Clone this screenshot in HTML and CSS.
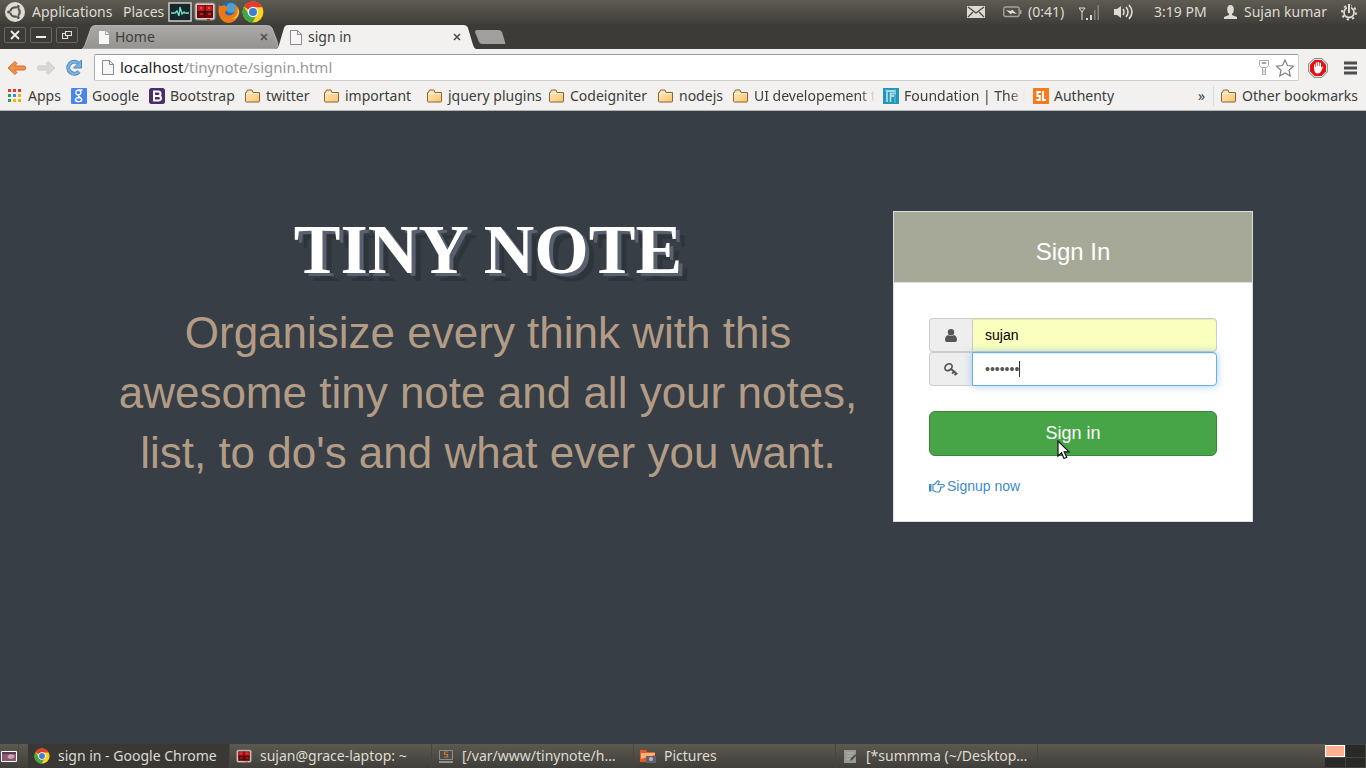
FILE: index.html
```html
<!DOCTYPE html>
<html lang="en">
<head>
<meta charset="utf-8">
<title>sign in</title>
<link rel="stylesheet" href="styles.css">
</head>
<body>
<svg class="defs" aria-hidden="true">
  <defs>
    <linearGradient id="gold" x1="0" y1="0" x2="1" y2="1"><stop offset="0" stop-color="#ffeec4"/><stop offset="1" stop-color="#fbc36a"/></linearGradient>
    <linearGradient id="metal" x1="0" y1="0" x2="0" y2="1"><stop offset="0" stop-color="#aaa9a7"/><stop offset="1" stop-color="#949390"/></linearGradient>
    <symbol id="folder" viewBox="0 0 16 16"><path d="M.5 13V4.500h1l1-2.500h4.500l1 2.500h6.500V13q0 1-1 1h-12q-1 0-1-1z" fill="url(#gold)" stroke="#8c6239"/><path d="M1.500 5.500h12" stroke="#fff3d6"/></symbol>
    <symbol id="chrome" viewBox="0 0 20 20"><circle cx="10" cy="10" r="9.500" fill="#ffd21e"/><path d="M10 10 1.800 5.200A9.500 9.500 0 0 1 18.500 5.700H10z" fill="#e33b2e"/><path d="M1.800 5.200A9.500 9.500 0 0 0 9.500 19.500L13.700 12 10 10 6 12z" fill="#3fa845"/><circle cx="10" cy="10" r="4.700" fill="#fff"/><circle cx="10" cy="10" r="3.700" fill="#3f7fd0"/></symbol>
    <symbol id="terminal" viewBox="0 0 22 20"><rect x="1" y="1" width="20" height="17" rx="2" fill="#d1cdc8" stroke="#8b8782"/><path d="M3 3h16v13H3z" fill="#6d0708"/><path d="M3.500 3.500h15v6h-15z" fill="#c51b1b"/><path d="M11 3v13M3 9.500h16" stroke="#300"/><path d="m6 5 2 2m0-2L6 7m8-2 2 2m0-2-2 2M6 12h3m5 0h3" stroke="#f06060" stroke-width=".8"/><path d="M13 17.500h3" stroke="#e00"/></symbol>
    <symbol id="page" viewBox="0 0 12 15"><path d="M.5.500h7l4 4v10H.5z" fill="#f7f7f7" stroke="#8b8b8b"/><path d="M7.500.5v4h4" fill="none" stroke="#8b8b8b"/></symbol>
    <symbol id="close" viewBox="0 0 8 8"><path d="m1 1 6 6m0-6L1 7" stroke="#4d4d4a" stroke-width="1.600"/></symbol>
  </defs>
</svg>

<header class="panel">
  <nav class="panel-menu">
    <svg width="20" height="20" viewBox="0 0 20 20"><circle cx="10" cy="10" r="10" fill="#dfdbd2"/><circle cx="10" cy="10" r="4.700" fill="none" stroke="#55524a" stroke-width="2.200"/><g stroke="#dfdbd2" stroke-width="1.200"><path d="M10 10H3M10 10l3.500-6M10 10l3.500 6"/></g><circle cx="10" cy="10" r="3.200" fill="#dfdbd2"/><g fill="#55524a"><circle cx="3.600" cy="10" r="1.500"/><circle cx="13.200" cy="4.400" r="1.500"/><circle cx="13.200" cy="15.600" r="1.500"/></g></svg>
    <a href="#">Applications</a>
    <a href="#">Places</a>
  </nav>
  <div class="launchers">
    <svg width="24" height="20" viewBox="0 0 24 20"><rect x="1" y="1" width="22" height="18" fill="#16262b" stroke="#d0cec9" stroke-width="1.500"/><path d="M3 11h4l2-2 2 5 1-9 2 7 2-2 1 1h4" fill="none" stroke="#72e3cb" stroke-width="1.300"/></svg>
    <svg width="22" height="20"><use href="#terminal"/></svg>
    <svg width="22" height="22" viewBox="0 0 22 22"><circle cx="11" cy="11" r="10.300" fill="#276bb3"/><circle cx="13" cy="7" r="5" fill="#45a3dc"/><path d="M1 4c1 1 2 1 3 1 2-1 4 0 5 1l2 3c-3 0-4 1-4 3 1 3 6 3 8 1 3-3 3-7 1-10 4 2 6 6 5 10-2 6-6 9-11 9C3 21-1 14 1 4z" fill="#ed7817"/><path d="M19 6c2 5 0 10-5 12 5 0 7-4 7-8z" fill="#ffd13c"/></svg>
    <svg width="22" height="22"><use href="#chrome"/></svg>
  </div>
  <div class="indicators">
    <svg width="18" height="14" viewBox="0 0 18 14"><path d="M0 1h18v12H0z" fill="#dfdbd2"/><path d="m1 2 8 6 8-6M1 12l5-5m11 5-5-5" fill="none" stroke="#4d4b44" stroke-width="1.300"/></svg>
    <svg width="19" height="12" viewBox="0 0 19 12"><rect x=".7" y="1" width="15.500" height="9.500" rx="2" fill="none" stroke="#a5a29a" stroke-width="1.400"/><path d="M17 4h1.500v4H17z" fill="#a5a29a"/><path d="m3 4 5 1 1-1.500L14 8 9 7 8 8.500z" fill="#dfdbd2"/></svg>
    <span>(0:41)</span>
    <svg width="20" height="18" viewBox="0 0 20 18"><path d="M0 5h6L3 9zm3 3v9" fill="none" stroke="#dfdbd2"/><path d="M7 15h2v2H7zm4-3h2v5h-2z" fill="#dfdbd2"/><path d="M15 7h1.500v10H15zm3.500-5H20v15h-1.500z" fill="#85827a"/></svg>
    <svg width="22" height="18" viewBox="0 0 22 18"><path d="M1 6h3l4-3v12l-4-3H1z" fill="#dfdbd2"/><path d="M10 6q2 3 0 6m3-8q4 5 0 10m3-12q6 7 0 14" fill="none" stroke="#dfdbd2" stroke-width="1.600"/></svg>
    <time>3:19 PM</time>
    <svg width="13" height="15" viewBox="0 0 13 15"><ellipse cx="6.500" cy="4.500" rx="3.300" ry="4.500" fill="#dfdbd2"/><path d="M5 7h3v3l5 2v2H0v-2l5-2z" fill="#dfdbd2"/></svg>
    <span>Sujan kumar</span>
    <svg width="18" height="18" viewBox="0 0 18 18"><circle cx="9" cy="9.500" r="5" fill="none" stroke="#dfdbd2" stroke-width="1.800"/><circle cx="9" cy="9.500" r="7" fill="none" stroke="#dfdbd2" stroke-width="2" stroke-dasharray="2.300 3.200"/><path d="M7 2h4v6H7z" fill="#4c4a43"/><path d="M9 1v9" stroke="#dfdbd2" stroke-width="2"/></svg>
  </div>
</header>

<div class="tabstrip">
  <div class="window-buttons">
    <button type="button" aria-label="Close"><svg width="10" height="10" viewBox="0 0 10 10"><path d="m1 1 8 8m0-8L1 9" stroke="#eee" stroke-width="1.800"/></svg></button>
    <button type="button" aria-label="Minimize"><svg width="10" height="10" viewBox="0 0 10 10"><path d="M0 7h10" stroke="#eee" stroke-width="2"/></svg></button>
    <button type="button" aria-label="Restore"><svg width="10" height="10" viewBox="0 0 10 10"><path d="M3.500 1.500h6v4h-6zM3 3.500H.5v5h5V6" fill="none" stroke="#ddd" stroke-width="1.200"/></svg></button>
  </div>
  <div class="tab">
    <svg class="tab-shape" viewBox="0 0 200 24" preserveAspectRatio="none"><path d="M0 24q2-1 3-4L9 3q1-2.500 4-2.500h172q4 0 5 2.500l5 13q2 6-2 8z" fill="url(#metal)" stroke="#c2c1be" stroke-width=".8"/></svg>
    <svg class="tab-icon" width="10" height="13" viewBox="0 0 10 13"><path d="M0 0h6v4h4v9H0zM7 0l3 3H7z" fill="#f6f6f6"/></svg>
    <span>Home</span>
    <button type="button" aria-label="Close Home"><svg width="8" height="8"><use href="#close"/></svg></button>
  </div>
  <div class="tab tab-active">
    <svg class="tab-shape" viewBox="0 0 200 24" preserveAspectRatio="none"><path d="M0 24q2-1 3-4L8 3q1-3 4-3h175q4 0 5 3l5 17q1 3 3 4z" fill="#f2f1f0"/></svg>
    <svg class="tab-icon" width="12" height="15"><use href="#page"/></svg>
    <span>sign in</span>
    <button type="button" aria-label="Close sign in"><svg width="8" height="8"><use href="#close"/></svg></button>
  </div>
  <button class="new-tab" type="button" aria-label="New tab"><svg width="32" height="15" viewBox="0 0 32 15"><path d="M1 2q0-2 2-2h21q3 0 4 2l3 10q1 2-1 2H8q-2 0-3-2z" fill="#a09f9d"/></svg></button>
</div>

<div class="toolbar">
  <button type="button" aria-label="Back"><svg width="20" height="16" viewBox="0 0 20 16"><path d="M8 1.500 1 8l7 6.500 2-2L7.500 10H17q1.500 0 1.500-2T17 6H7.500L10 3.500z" fill="#f0924c" stroke="#d56b22"/></svg></button>
  <button type="button" aria-label="Forward"><svg width="20" height="16" viewBox="0 0 20 16"><path d="m12 1.500 7 6.500-7 6.500-2-2 2.500-2.500H3Q1.500 10 1.500 8T3 6h9.500L10 3.500z" fill="#d9d8d6" stroke="#cccbc9"/></svg></button>
  <button type="button" aria-label="Reload"><svg width="18" height="18" viewBox="0 0 18 18"><path d="M14 12.500A6 6 0 1 1 13 4" fill="none" stroke="#4686bf" stroke-width="4"/><path d="M14 12.500A6 6 0 1 1 13 4" fill="none" stroke="#79b1df" stroke-width="2.400"/><path d="M16.500 1v8h-8z" fill="#79b1df" stroke="#4686bf"/></svg></button>
  <div class="address">
    <svg width="12" height="15"><use href="#page"/></svg>
    <a href="#">localhost<span>/tinynote/signin.html</span></a>
    <svg width="10" height="16" viewBox="0 0 10 16"><path d="M.5.500h9v5l-2 2h-5l-2-2zm3 7v7h3v-7M3 2.500h4v1H3zM5 13v-3" fill="none" stroke="#a9a9a9"/></svg>
    <svg width="20" height="18" viewBox="0 0 20 18"><path d="m10 1 2.500 5.500 6 .7-4.500 4 1.300 5.800L10 14l-5.300 3L6 11.200l-4.500-4 6-.7z" fill="#fff" stroke="#808080" stroke-width="1.200"/></svg>
  </div>
  <button type="button" aria-label="AdBlock"><svg width="20" height="20" viewBox="0 0 20 20"><path d="M6 .7h8L19.300 6v8L14 19.300H6L.7 14V6z" fill="#fff" stroke="#777"/><path d="M6.500 2h7L18 6.500v7L13.500 18h-7L2 13.500v-7z" fill="#e31313"/><path d="M6 10V6.500h1.200V9h.6V4.500H9V8h.6V4H11v4h.6V4.800H13V10l1-1.500 1 .5-2 4.500q-1 2-3.500 2T6.500 13z" fill="#fff"/></svg></button>
  <button type="button" aria-label="Menu"><svg width="13" height="14" viewBox="0 0 13 14"><path d="M0 2h13M0 7h13M0 12h13" stroke="#4c4c4c" stroke-width="3"/></svg></button>
</div>

<nav class="bookmarks">
  <a href="#"><svg width="14" height="14" viewBox="0 0 14 14"><path d="M0 0h3v3H0zm5 0h3v3H5zm5 0h3v3h-3z" fill="#e3392c"/><path d="M0 5h3v3H0zm0 5h3v3H0z" fill="#2f9e50"/><path d="M5 5h3v3H5z" fill="#4285f4"/><path d="M10 5h3v3h-3zM5 10h3v3H5zm5 0h3v3h-3z" fill="#f4b400"/></svg>Apps</a>
  <a href="#"><svg width="16" height="16" viewBox="0 0 16 16"><rect width="16" height="16" rx="1" fill="#4a86e8"/><path d="M11.500 2H8C5 2 4.500 4 5 5.500 5.500 7 8 7.500 9.500 6 10.500 4 9.500 2.500 8 2.500M7.500 7c-1 2 3 2 3.200 4.500S5 14.500 4.500 12s3.500-2.500 4.500-2.500" fill="none" stroke="#fff" stroke-width="1.400"/></svg>Google</a>
  <a href="#"><svg width="16" height="16" viewBox="0 0 16 16"><rect width="16" height="16" rx="2.500" fill="#4b2e70"/><path d="M5 3.500h4q2.500 0 2.500 2.200T9 8q3 0 3 2.300T9 12.500H5zM5 8h4" fill="none" stroke="#fff" stroke-width="2"/></svg>Bootstrap</a>
  <a href="#"><svg width="16" height="16"><use href="#folder"/></svg>twitter</a>
  <a href="#"><svg width="16" height="16"><use href="#folder"/></svg>important</a>
  <a href="#"><svg width="16" height="16"><use href="#folder"/></svg>jquery plugins</a>
  <a href="#"><svg width="16" height="16"><use href="#folder"/></svg>Codeigniter</a>
  <a href="#"><svg width="16" height="16"><use href="#folder"/></svg>nodejs</a>
  <a class="faded" href="#"><svg width="16" height="16"><use href="#folder"/></svg>UI developement t</a>
  <a class="faded" href="#"><svg width="16" height="16" viewBox="0 0 16 16"><path d="M0 0h16v16H0z" fill="#2795b6"/><path d="M4 14V3h8v2.500H7.500V14m0-6H11" fill="none" stroke="#a6dcec" stroke-width="1.800"/><path d="M3 1v3m9-3v14" stroke="#72bfd5"/></svg>Foundation | The M</a>
  <a href="#"><svg width="16" height="16" viewBox="0 0 16 16"><path d="M0 0h16v16H0z" fill="#fb7b1c"/><path d="M8 4H4.500v4h2.300v4H3.500M10 3v9h3" fill="none" stroke="#fff" stroke-width="2"/></svg>Authenty</a>
  <button class="more" type="button">»</button>
  <a class="other" href="#"><svg width="16" height="16"><use href="#folder"/></svg>Other bookmarks</a>
</nav>

<main class="page">
  <div class="container">
    <section class="intro">
      <h1>TINY NOTE</h1>
      <p>Organisize every think with this awesome tiny note and all your notes, list, to do's and what ever you want.</p>
    </section>
    <section class="card">
      <h2>Sign In</h2>
      <form class="card-body">
        <div class="field">
          <label for="user" aria-label="Username"><svg width="12" height="13" viewBox="0 0 12 13"><circle cx="6" cy="3.300" r="3.200" fill="#555"/><path d="M3 6q3 2 6 0 3 1 3 5 0 2-2 2H2q-2 0-2-2 0-4 3-5z" fill="#555"/></svg></label>
          <input class="filled" id="user" type="text" value="sujan">
        </div>
        <div class="field">
          <label for="password" aria-label="Password"><svg width="14" height="13" viewBox="0 0 14 13"><ellipse cx="4.500" cy="4.200" rx="3.900" ry="3" transform="rotate(-40 4.500 4.200)" fill="none" stroke="#555" stroke-width="1.700"/><path d="m6.500 5.500 6.700 5.700M10 8.300l-1.800 2.400m4-.7-1.500 2.200" fill="none" stroke="#555" stroke-width="1.900"/></svg></label>
          <input class="active" id="password" type="password" value="tinynot">
          <i class="caret"></i>
        </div>
        <button class="submit" type="submit">Sign in<svg class="pointer" width="14" height="21" viewBox="0 0 14 21"><path d="M1 1v15l3.500-3.300L7 18.500l2.800-1.200-2.600-5.500H12z" fill="#fff" stroke="#111" stroke-width="1.200"/></svg></button>
        <a class="signup" href="#"><svg width="16" height="13" viewBox="0 0 16 13"><path d="M0 4h2.500v7.500H0z" fill="#428bca"/><path d="M4 4.500h1.500L8.500 1q2-.5 1.500 1.500L9 4.500h5q1.300.2 1.300 1.200T14 7h-3q1.500.5.500 2 .5 1-.7 1.500.2 1.500-1.500 1.500H7L4 10.500z" fill="none" stroke="#428bca" stroke-width="1.200"/></svg>Signup now</a>
      </form>
    </section>
  </div>
</main>

<footer class="taskbar">
  <button class="desktop" type="button" aria-label="Show desktop"><svg width="16" height="11" viewBox="0 0 16 11"><path d="M.5.500h15v10H.5z" fill="#8f5674" stroke="#fff"/><path d="M1 2h14" stroke="#493440" stroke-width="1.500"/><path d="M9 3q-5 3 0 5 6-1 4-4z" fill="#c9a5b8"/></svg></button>
  <div class="windows">
    <button class="current" type="button"><svg width="16" height="16"><use href="#chrome"/></svg>sign in - Google Chrome</button>
    <button type="button"><svg width="16" height="15"><use href="#terminal"/></svg>sujan@grace-laptop: ~</button>
    <button type="button"><svg width="16" height="15" viewBox="0 0 16 15"><path d="M1.500 1.500h13v9h-13z" fill="#4d4d4a" stroke="#8f8e8b"/><path d="M1 13h14" stroke="#aaa" stroke-width="1.500"/><path d="M10 3H6.500v2.500h3V8H6" fill="none" stroke="#c07a35" stroke-width="1.200"/></svg>[/var/www/tinynote/h…</button>
    <button type="button"><svg width="16" height="15" viewBox="0 0 16 15"><path d="M0 1h6l1 2h8v10H0z" fill="#e85b21"/><path d="M1 4h14v2L1 10z" fill="#f6b280"/><path d="M6 7h10v7H6z" fill="#66606d"/><circle cx="11" cy="10" r="2" fill="#b9b4c2"/></svg>Pictures</button>
    <button type="button"><svg width="16" height="15" viewBox="0 0 16 15"><path d="M2 1h12v13H2z" fill="#979793"/><path d="M4 4h8M4 7h6M4 10h4" stroke="#b4b4af"/><path d="m8 12 1-3 5-4 1 1-5 5z" fill="#4c4b47"/></svg>[*summma (~/Desktop…</button>
  </div>
  <div class="workspaces"><i class="here"></i><i></i><i></i><i></i></div>
</footer>
</body>
</html>
```

FILE: styles.css
```css
* { box-sizing: border-box; }
body {
  margin: 0;
  min-height: 100vh;
  display: flex;
  flex-direction: column;
  background: #373e46;
  font: 14px/20px "Noto Sans", sans-serif;
  color: #3d3d3b;
}
a { color: inherit; text-decoration: none; }
button {
  border: 0;
  padding: 0;
  background: none;
  color: inherit;
  font: inherit;
}
svg { flex: none; }
button > svg { display: block; }
.defs { position: absolute; width: 0; height: 0; }

/* Desktop panel */
.panel {
  height: 24px;
  display: flex;
  align-items: center;
  background: linear-gradient(#5e5b52, #3f3e39);
  color: #dfdbd2;
  padding: 0 8px 0 5px;
}
.panel-menu {
  display: grid;
  grid-template-columns: 27px 91px 45px;
  align-items: center;
}
.launchers { display: flex; align-items: center; gap: 2px; }
.indicators {
  margin-left: auto;
  display: grid;
  grid-template-columns: 36px 25px 51px 34px 41px 70px 20px 96px 18px;
  align-items: center;
  white-space: nowrap;
}

/* Browser tabs */
.tabstrip {
  height: 25px;
  display: flex;
  align-items: flex-end;
  background: #3c3b37;
}
.window-buttons { display: flex; gap: 4px; padding: 0 4px 6px; }
.window-buttons button {
  width: 22px;
  height: 16px;
  display: grid;
  place-items: center;
  border: 1px solid #69675f;
  border-radius: 2px;
}
.tab {
  position: relative;
  width: 200px;
  height: 24px;
  display: flex;
  align-items: center;
  gap: 6px;
  padding: 0 14px 0 17px;
}
.tab-active { margin-left: -6px; padding: 0 15px 0 14px; }
.tab-shape { position: absolute; inset: 0; width: 100%; height: 100%; }
.tab-icon, .tab span, .tab button { position: relative; }
.tab button { margin-left: auto; }
.new-tab { padding-bottom: 4px; margin-left: -2px; }

/* Toolbar */
.toolbar {
  height: 35px;
  display: flex;
  align-items: center;
  gap: 9px;
  padding: 2px 9px 0 7px;
  background: #f2f1f0;
}
.address {
  flex: 1;
  height: 27px;
  display: flex;
  align-items: center;
  gap: 6px;
  margin-left: 2px;
  padding: 0 3px 0 7px;
  border: 1px solid #cfcecd;
  border-top-color: #9a9a9a;
  border-left-color: #aaa;
  border-radius: 2px;
  background: #fff;
}
.address a { flex: 1; padding-bottom: 2px; font-size: 15px; color: #222; }
.address a span { color: #999; }
.toolbar button:last-child { margin-left: 7px; }

/* Bookmarks */
.bookmarks {
  height: 27px;
  display: grid;
  grid-template-columns: 63px 78px 96px 79px 103px 122px 109px 75px 150px 150px 90px 1fr auto;
  align-items: center;
  padding: 0 8px 2px;
  background: #f2f1f0;
  border-bottom: 1px solid #b5b4b3;
  white-space: nowrap;
}
.bookmarks a { display: flex; align-items: center; gap: 5px; }
.bookmarks a:first-child { gap: 6px; }
.bookmarks .faded {
  width: 142px;
  overflow: hidden;
  mask-image: linear-gradient(90deg, #000 90%, transparent);
}
.more { justify-self: end; padding-right: 8px; }
.bookmarks .other { padding-left: 7px; border-left: 1px solid #d0dbe4; }

/* Page */
.page { flex: 1; padding: 100px 0; font-family: "Liberation Sans", Arial, sans-serif; }
.container {
  max-width: 1170px;
  margin: 0 auto;
  display: grid;
  grid-template-columns: 2fr 1fr;
  align-items: start;
}
.intro { padding: 0 15px; text-align: center; }
.intro h1 {
  margin: 0 0 15px;
  font: bold 70px/77px "Liberation Serif", "Times New Roman", serif;
  color: #fff;
  text-shadow: 4px 3px 0 #5b6070, 9px 8px 0 #2e353a;
}
.intro p { margin: 0; font-size: 44px; line-height: 60px; color: #b39c85; }
.card { margin: 0 15px; background: #fff; border: 1px solid #ddd; }
.card h2 {
  margin: 0;
  padding: 27px 16px 17px;
  font-size: 24px;
  font-weight: normal;
  line-height: 26px;
  text-align: center;
  color: #fff;
  background: #a7a998;
  border-bottom: 1px solid #ddd;
}
.card-body { padding: 35px 35px 25px; }
.field { position: relative; display: flex; height: 34px; }
.field label {
  width: 43px;
  display: grid;
  place-items: center;
  background: #eee;
  border: 1px solid #ccc;
  border-right: 0;
  border-radius: 4px 0 0 4px;
}
.field input {
  flex: 1;
  min-width: 0;
  padding: 6px 12px;
  border: 1px solid #ccc;
  border-radius: 0 4px 4px 0;
  background: #fff;
  font: inherit;
  color: #555;
  outline: 0;
  box-shadow: inset 0 1px 1px rgba(0, 0, 0, .08);
}
.field .filled { background: #faffbd; color: #000; }
.field .active {
  border-color: #66afe9;
  box-shadow: inset 0 1px 1px rgba(0, 0, 0, .08), 0 0 8px rgba(102, 175, 233, .6);
}
.caret { position: absolute; left: 90px; top: 9px; width: 1px; height: 16px; background: #333; }
.submit {
  position: relative;
  display: block;
  width: 100%;
  height: 45px;
  margin: 25px 0 20px;
  padding-bottom: 2px;
  border: 1px solid #398439;
  border-radius: 6px;
  background: #47a447;
  color: #fff;
  font-size: 18px;
}
.pointer { position: absolute; left: 127px; top: 28px; }
.signup { display: flex; align-items: center; gap: 2px; color: #428bca; }

/* Taskbar */
.taskbar {
  height: 24px;
  display: flex;
  background: linear-gradient(#5c5950, #3f3e39);
  color: #dfdbd2;
}
.desktop { width: 19px; padding-left: 1px; border-right: 1px solid #47453f; }
.windows { flex: 1; display: flex; margin-left: 9px; }
.windows button {
  width: 202px;
  display: flex;
  align-items: center;
  gap: 8px;
  padding: 0 6px;
  border-right: 1px solid #47453f;
  white-space: nowrap;
}
.windows .current { background: #393834; }
.workspaces {
  width: 41px;
  display: grid;
  grid-template-columns: 1fr 1fr;
  gap: 1px;
  padding: 1px 1px 1px 0;
  background: #45433d;
}
.workspaces i { background: #292927; }
.workspaces .here { background: #ffb092; border: 1px solid #fff; }
```
